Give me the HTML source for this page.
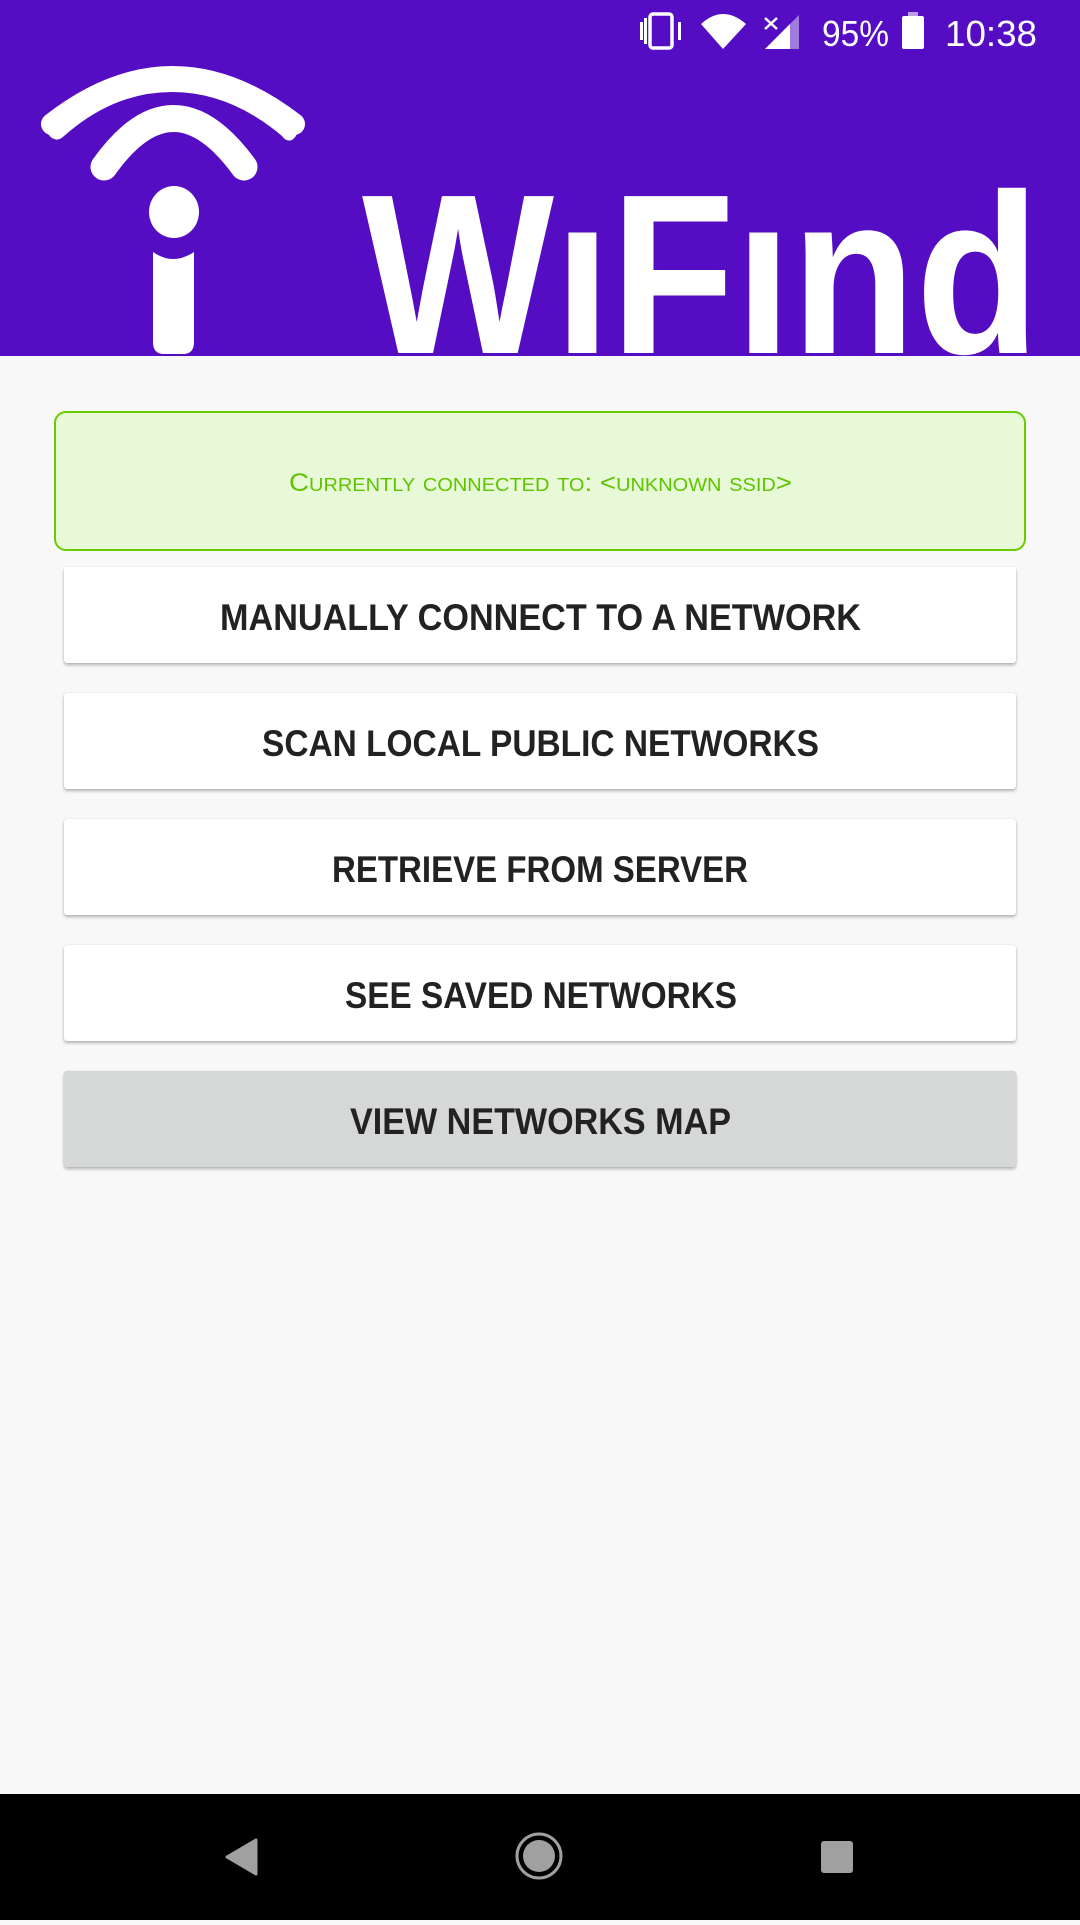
<!DOCTYPE html>
<html><head><meta charset="utf-8"><style>
html,body{margin:0;padding:0;width:1080px;height:1920px;overflow:hidden;background:#f8f8f8;font-family:"Liberation Sans",sans-serif}
.hdr{position:absolute;left:0;top:0;width:1080px;height:356px;background:#540dc3}
.btn{position:absolute;left:64px;width:952px;height:96px;background:#fff;border-radius:3px;box-shadow:0 2px 3px rgba(0,0,0,.28),0 0 1px rgba(0,0,0,.15)}
.btn svg{position:absolute;left:0;top:0}
.nav{position:absolute;left:0;top:1794px;width:1080px;height:126px;background:#000}
</style></head><body>
<div class="hdr">
<svg width="1080" height="356" style="position:absolute;left:0;top:0">
<g fill="#fff">
<rect x="650" y="14" width="22" height="34" rx="3" fill="none" stroke="#fff" stroke-width="3.5"/>
<rect x="640" y="22" width="3" height="18"/>
<rect x="678" y="22" width="3" height="18"/>
<rect x="644" y="18" width="3" height="26"/>
<path d="M701 24 Q723 4 746 24 L723 49 Z"/>
<path d="M765 49 L799 15 L799 49 Z" opacity="0.45"/>
<path d="M765 49 L790 24 L790 49 Z"/>
<path d="M765 18 L777 29 M777 18 L765 29" stroke="#fff" stroke-width="2.5"/>
<text x="822" y="46" font-size="36" font-family="Liberation Sans" textLength="67" lengthAdjust="spacingAndGlyphs">95%</text>
<rect x="908" y="12" width="10" height="5" opacity="0.6"/>
<rect x="902" y="16" width="22" height="33" rx="2"/>
<text x="945" y="46" font-size="36" font-family="Liberation Sans" textLength="92" lengthAdjust="spacingAndGlyphs">10:38</text>
<path d="M50 126 Q172 18 296 126 Q300 134 292 140 Q286 142 282 136 Q230 92 172 92 Q114 92 64 136 Q58 142 52 138 Q44 132 50 126 Z"/>
<path d="M52 124 Q172 30 294 124" fill="none" stroke="#fff" stroke-width="22" stroke-linecap="round"/>
<path d="M104 167 Q173 70 244 167" fill="none" stroke="#fff" stroke-width="27" stroke-linecap="round"/>
<ellipse cx="174" cy="212" rx="25" ry="26"/>
<path d="M153 252 Q173 266 194 252 L194 342 Q194 354 183 354 L164 354 Q153 354 153 342 Z"/>
<text x="362" y="353" font-size="228" font-weight="bold" font-family="Liberation Sans" textLength="678" lengthAdjust="spacingAndGlyphs">WıFınd</text>
</g>
</svg>
</div>

<div style="position:absolute;left:54px;top:411px;width:968px;height:136px;background:#e7f9d7;border:2px solid #66cc00;border-radius:12px"></div>
<svg width="1080" height="40" style="position:absolute;left:0;top:460px">
<text x="289" y="31" font-size="25" fill="#5fc400" font-family="Liberation Sans" style="font-variant:small-caps" textLength="503" lengthAdjust="spacingAndGlyphs">Currently connected to: &lt;unknown ssid&gt;</text>
</svg>

<div class="btn" style="top:567px"><svg width="952" height="96"><text x="156" y="63" font-size="37" font-weight="bold" fill="#222" textLength="641" lengthAdjust="spacingAndGlyphs">MANUALLY CONNECT TO A NETWORK</text></svg></div>
<div class="btn" style="top:693px"><svg width="952" height="96"><text x="198" y="63" font-size="37" font-weight="bold" fill="#222" textLength="557" lengthAdjust="spacingAndGlyphs">SCAN LOCAL PUBLIC NETWORKS</text></svg></div>
<div class="btn" style="top:819px"><svg width="952" height="96"><text x="268" y="63" font-size="37" font-weight="bold" fill="#222" textLength="416" lengthAdjust="spacingAndGlyphs">RETRIEVE FROM SERVER</text></svg></div>
<div class="btn" style="top:945px"><svg width="952" height="96"><text x="281" y="63" font-size="37" font-weight="bold" fill="#222" textLength="392" lengthAdjust="spacingAndGlyphs">SEE SAVED NETWORKS</text></svg></div>
<div class="btn" style="top:1071px;background:#d6d7d7"><svg width="952" height="96"><text x="286" y="63" font-size="37" font-weight="bold" fill="#222" textLength="381" lengthAdjust="spacingAndGlyphs">VIEW NETWORKS MAP</text></svg></div>

<div class="nav">
<svg width="1080" height="126">
<path d="M256 46 L256 80 L227 63 Z" fill="#a0a0a0" stroke="#a0a0a0" stroke-width="3" stroke-linejoin="round"/>
<circle cx="539" cy="62" r="22" fill="none" stroke="#a0a0a0" stroke-width="3"/>
<circle cx="539" cy="62" r="16" fill="#a0a0a0"/>
<rect x="821" y="47" width="32" height="32" rx="3" fill="#a0a0a0"/>
</svg>
</div>
</body></html>
